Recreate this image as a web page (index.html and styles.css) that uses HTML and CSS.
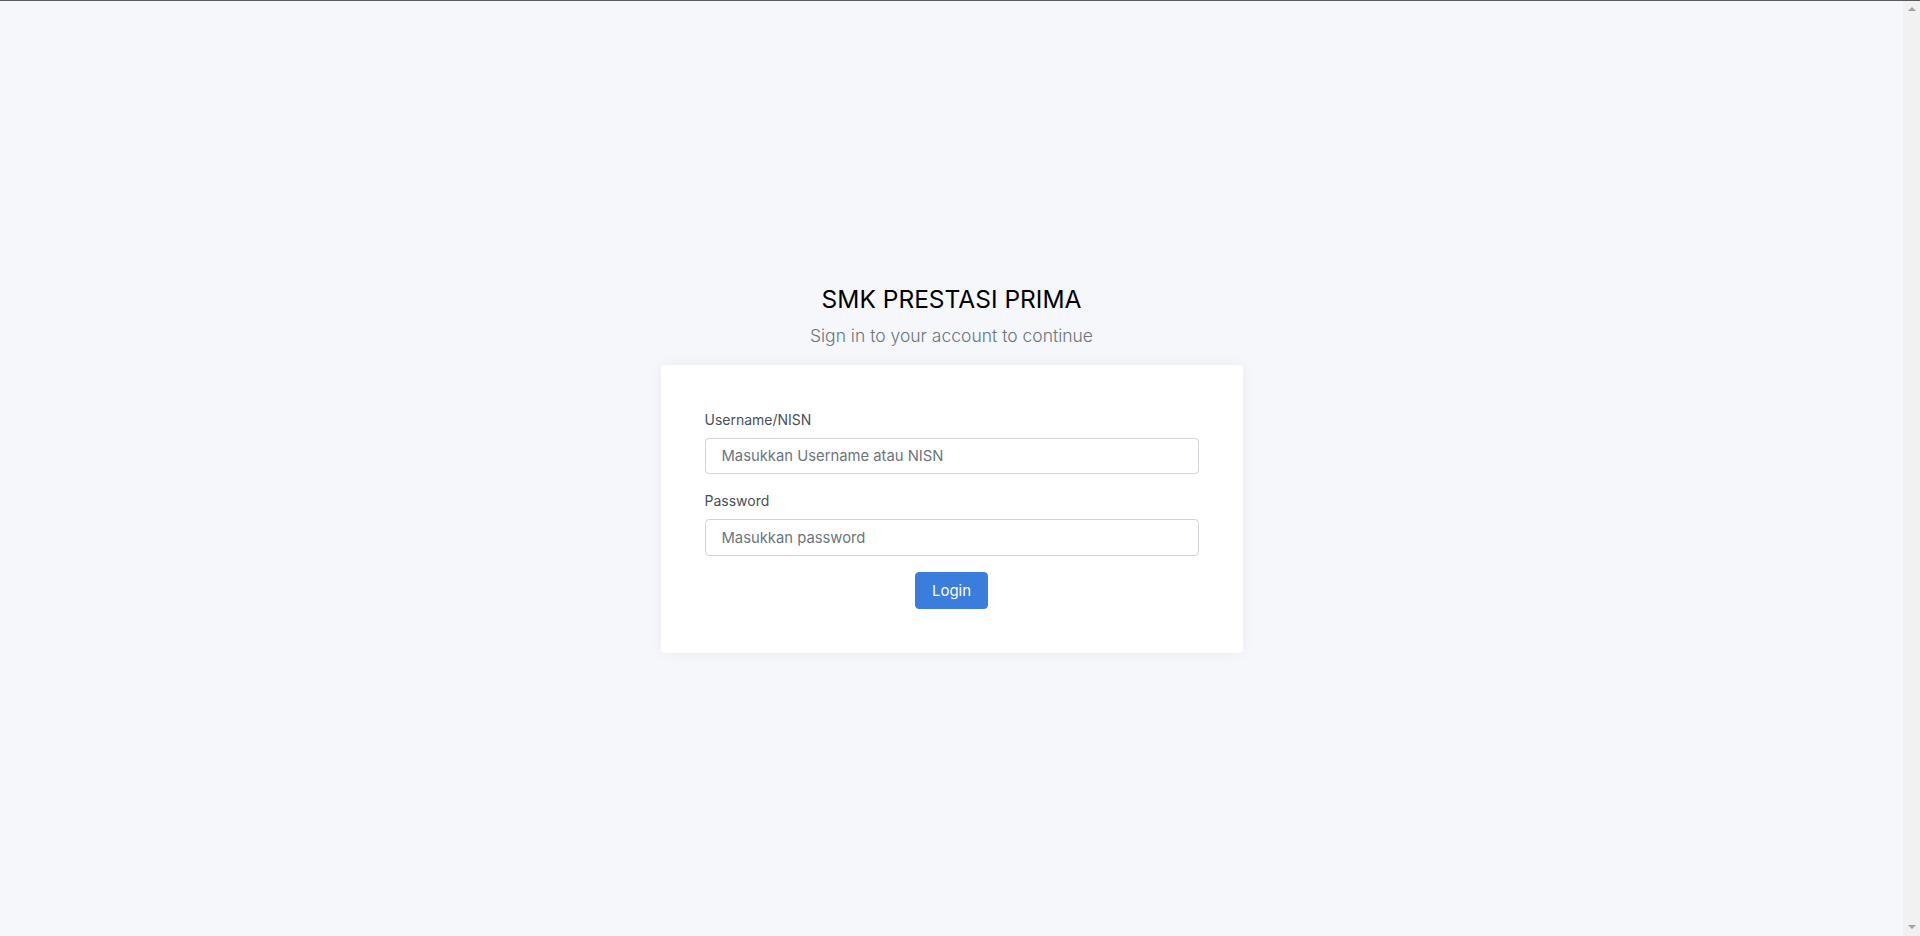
FILE: index.html
```html
<!DOCTYPE html>
<html lang="id">
<head>
<meta charset="utf-8">
<title>SMK PRESTASI PRIMA - Login</title>
<link rel="stylesheet" href="styles.css">
</head>
<body>
<div class="topline"></div>
<main class="page">
  <div class="signin">
    <div class="heading">
      <h1 class="title">SMK PRESTASI PRIMA</h1>
      <p class="lead">Sign in to your account to continue</p>
    </div>
    <div class="card">
      <form class="card-body">
        <div class="field">
          <label class="form-label" for="username">Username/NISN</label>
          <input class="form-control" id="username" type="text" placeholder="Masukkan Username atau NISN">
        </div>
        <div class="field">
          <label class="form-label" for="password">Password</label>
          <input class="form-control" id="password" type="password" placeholder="Masukkan password">
        </div>
        <div class="actions">
          <button class="btn" type="button">Login</button>
        </div>
      </form>
    </div>
  </div>
</main>
<aside class="scrollbar" aria-hidden="true">
  <span class="arrow arrow-up"></span>
  <span class="arrow arrow-down"></span>
</aside>
</body>
</html>
```
FILE: styles.css
```css
* {
  box-sizing: border-box;
}
html, body {
  height: 100%;
  overflow: hidden;
}
body {
  margin: 0;
  display: flex;
  background: #f5f7fb;
  font-family: Inter, "Noto Sans", "Liberation Sans", sans-serif;
  font-size: 14px;
  line-height: 1.5;
  color: #495057;
}
.topline {
  position: fixed;
  top: 0;
  left: 0;
  right: 0;
  height: 1px;
  background: #5a5a5a;
  z-index: 10;
}
.page {
  flex: 1;
  min-height: 100vh;
  display: flex;
  align-items: center;
  justify-content: center;
}
.signin {
  width: 582px;
  display: flex;
  flex-direction: column;
  padding: 26.5px 0 24px;
}
.heading {
  text-align: center;
}
.title {
  margin: 0 0 8px;
  font-size: 24.5px;
  line-height: 29.4px;
  font-weight: 400;
  color: #000;
}
.lead {
  margin: 0 0 15.5px;
  font-size: 17.5px;
  line-height: 26.25px;
  font-weight: 300;
  color: #6c757d;
}
.card {
  background: #fff;
  border-radius: 4px;
  box-shadow: 0 0 14px 0 rgba(33, 37, 41, 0.05);
}
.card-body {
  margin: 0;
  padding: 44px;
  display: flex;
  flex-direction: column;
}
.field {
  display: flex;
  flex-direction: column;
  margin-bottom: 16px;
}
.form-label {
  display: block;
  margin-bottom: 8px;
  font-size: 14px;
  line-height: 21px;
  color: #495057;
}
.form-control {
  display: block;
  width: 100%;
  height: 36.8px;
  padding: 5.6px 16px;
  font-family: inherit;
  font-size: 14.8px;
  line-height: 23.6px;
  color: #495057;
  background: #fff;
  border: 1px solid #ced4da;
  border-radius: 4px;
  outline: none;
}
.form-control::placeholder {
  color: #6c757d;
  opacity: 1;
}
.actions {
  display: flex;
  justify-content: center;
}
.btn {
  height: 36.8px;
  padding: 5.6px 16px;
  font-family: inherit;
  font-size: 15px;
  line-height: 23.6px;
  color: #fff;
  background: #3b7ddd;
  border: 1px solid #3b7ddd;
  border-radius: 4px;
  cursor: pointer;
}
.scrollbar {
  width: 17px;
  flex: none;
  height: 100vh;
  background: #f1f1f1;
  display: flex;
  flex-direction: column;
  justify-content: space-between;
  align-items: center;
  padding: 6px 0 6px;
}
.arrow {
  width: 0;
  height: 0;
  border-left: 4px solid transparent;
  border-right: 4px solid transparent;
}
.arrow-up {
  margin-top: 1px;
  border-bottom: 4px solid #a3a3a3;
}
.arrow-down {
  margin-bottom: 1px;
  border-top: 4px solid #a3a3a3;
}
```
